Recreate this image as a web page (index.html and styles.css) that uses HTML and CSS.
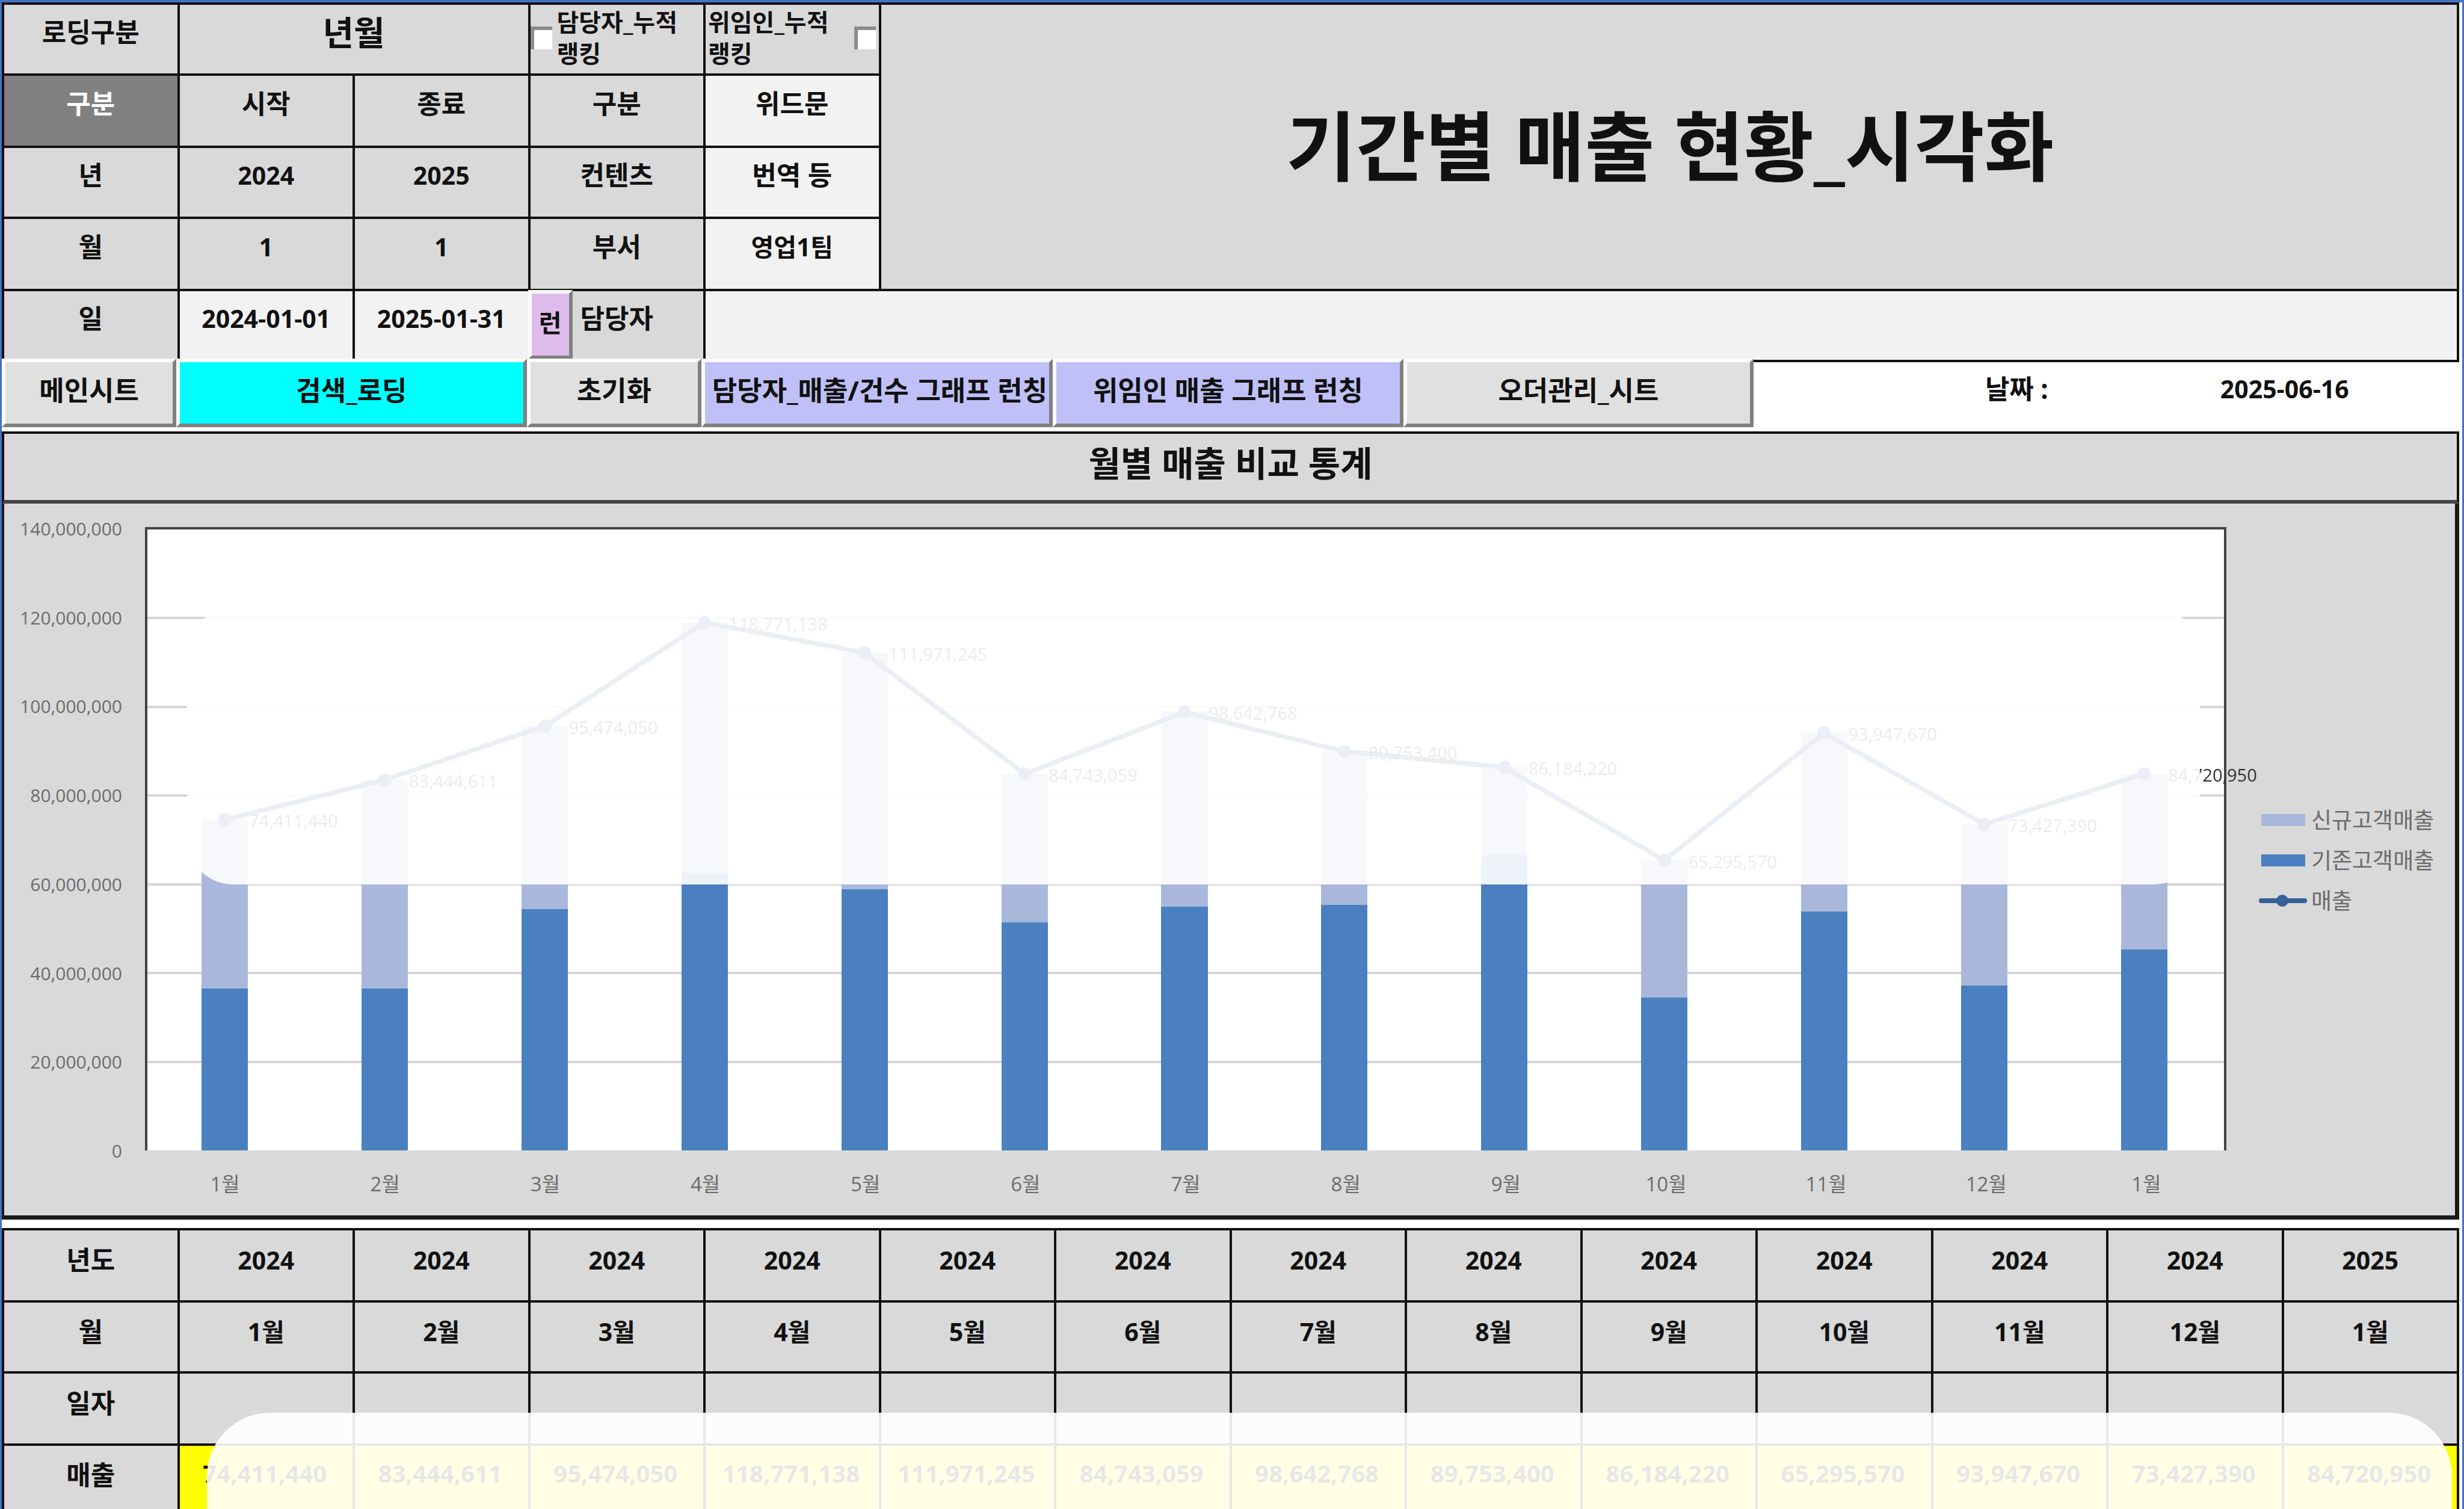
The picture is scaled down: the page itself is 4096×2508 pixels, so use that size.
FILE: index.html
```html
<!DOCTYPE html>
<html lang="ko">
<head>
<meta charset="utf-8">
<title>기간별 매출 현황_시각화</title>
<link rel="stylesheet" href="styles.css">
</head>
<body>
<main class="page">
  <div class="filters">
    <table class="sheet">
      <tr>
        <th>로딩구분</th>
        <td class="period" colspan="2">년월</td>
        <td class="rank"><label class="rank-label"><input type="checkbox" class="check"><span>담당자_누적<br>랭킹</span></label></td>
        <td class="rank"><label class="rank-label rank-label-end"><span>위임인_누적<br>랭킹</span><input type="checkbox" class="check"></label></td>
        <td class="title-cell" colspan="9" rowspan="4"><h1 class="title">기간별 매출 현황_시각화</h1></td>
      </tr>
      <tr><th class="dark">구분</th><th>시작</th><th>종료</th><th>구분</th><td class="light ko">위드문</td></tr>
      <tr><th>년</th><td>2024</td><td>2025</td><th>컨텐츠</th><td class="light ko">번역 등</td></tr>
      <tr><th>월</th><td>1</td><td>1</td><th>부서</th><td class="light">영업1팀</td></tr>
      <tr><th>일</th><td class="light">2024-01-01</td><td class="light">2025-01-31</td><th class="owner">담당자<button type="button" class="btn btn-run">런</button></th><td class="light" colspan="10"></td></tr>
    </table>
  </div>

  <nav class="toolbar">
    <button type="button" class="btn">메인시트</button>
    <button type="button" class="btn btn-cyan">검색_로딩</button>
    <button type="button" class="btn">초기화</button>
    <button type="button" class="btn btn-lilac"><span class="clip">담당자_매출/건수 그래프 런칭</span></button>
    <button type="button" class="btn btn-lilac">위임인 매출 그래프 런칭</button>
    <button type="button" class="btn">오더관리_시트</button>
    <div class="date"><span class="date-key">날짜 :</span><span class="date-value">2025-06-16</span></div>
  </nav>

  <h2 class="section-title">월별 매출 비교 통계</h2>

  <section class="chart">
    <ol class="y-axis">
      <li>140,000,000</li><li>120,000,000</li><li>100,000,000</li><li>80,000,000</li><li>60,000,000</li><li>40,000,000</li><li>20,000,000</li><li>0</li>
    </ol>
    <div class="plot">
      <div class="layer gridlines"><i></i><i></i><i></i><i></i><i></i><i></i><i></i></div>
      <div class="layer columns">
        <div class="column" style="--total:53.15%;--base:26%"><div class="new"></div><div class="base"></div></div>
        <div class="column" style="--total:59.6%;--base:26%"><div class="new"></div><div class="base"></div></div>
        <div class="column" style="--total:68.2%;--base:38.8%"><div class="new"></div><div class="base"></div></div>
        <div class="column" style="--total:84.84%;--base:44.6%"><div class="new"></div><div class="base"></div></div>
        <div class="column" style="--total:79.98%;--base:42%"><div class="new"></div><div class="base"></div></div>
        <div class="column" style="--total:60.53%;--base:36.7%"><div class="new"></div><div class="base"></div></div>
        <div class="column" style="--total:70.46%;--base:39.2%"><div class="new"></div><div class="base"></div></div>
        <div class="column" style="--total:64.11%;--base:39.5%"><div class="new"></div><div class="base"></div></div>
        <div class="column" style="--total:61.56%;--base:47.5%"><div class="new"></div><div class="base"></div></div>
        <div class="column" style="--total:46.64%;--base:24.6%"><div class="new"></div><div class="base"></div></div>
        <div class="column" style="--total:67.11%;--base:38.4%"><div class="new"></div><div class="base"></div></div>
        <div class="column" style="--total:52.45%;--base:26.5%"><div class="new"></div><div class="base"></div></div>
        <div class="column" style="--total:60.52%;--base:32.3%"><div class="new"></div><div class="base"></div></div>
      </div>
      <svg class="layer trend" viewBox="0 0 1300 140" preserveAspectRatio="none" aria-hidden="true">
        <polyline points="50,65.6 150,56.6 250,44.5 350,21.2 450,28 550,55.3 650,41.4 750,50.2 850,53.8 950,74.7 1050,46.1 1150,66.6 1250,55.3"/>
      </svg>
      <div class="layer columns">
        <div class="column" style="--total:53.15%"><b class="dot"></b><span class="value">74,411,440</span></div>
        <div class="column" style="--total:59.6%"><b class="dot"></b><span class="value">83,444,611</span></div>
        <div class="column" style="--total:68.2%"><b class="dot"></b><span class="value">95,474,050</span></div>
        <div class="column" style="--total:84.84%"><b class="dot"></b><span class="value">118,771,138</span></div>
        <div class="column" style="--total:79.98%"><b class="dot"></b><span class="value">111,971,245</span></div>
        <div class="column" style="--total:60.53%"><b class="dot"></b><span class="value">84,743,059</span></div>
        <div class="column" style="--total:70.46%"><b class="dot"></b><span class="value">98,642,768</span></div>
        <div class="column" style="--total:64.11%"><b class="dot"></b><span class="value">89,753,400</span></div>
        <div class="column" style="--total:61.56%"><b class="dot"></b><span class="value">86,184,220</span></div>
        <div class="column" style="--total:46.64%"><b class="dot"></b><span class="value">65,295,570</span></div>
        <div class="column" style="--total:67.11%"><b class="dot"></b><span class="value">93,947,670</span></div>
        <div class="column" style="--total:52.45%"><b class="dot"></b><span class="value">73,427,390</span></div>
        <div class="column" style="--total:60.52%"><b class="dot"></b><span class="value">84,720,950</span></div>
      </div>
      <div class="veil veil-plot"></div>
    </div>
    <ul class="legend">
      <li><span class="swatch swatch-new"></span>신규고객매출</li>
      <li><span class="swatch swatch-base"></span>기존고객매출</li>
      <li><svg class="swatch-line" viewBox="0 0 80 24" aria-hidden="true"><path d="M4 12H76"/><circle cx="39" cy="12" r="10"/></svg>매출</li>
    </ul>
    <ol class="x-axis">
      <li>1월</li><li>2월</li><li>3월</li><li>4월</li><li>5월</li><li>6월</li><li>7월</li><li>8월</li><li>9월</li><li>10월</li><li>11월</li><li>12월</li><li>1월</li>
    </ol>
  </section>

  <section class="data">
    <table class="sheet">
      <tr><th>년도</th><td>2024</td><td>2024</td><td>2024</td><td>2024</td><td>2024</td><td>2024</td><td>2024</td><td>2024</td><td>2024</td><td>2024</td><td>2024</td><td>2024</td><td>2025</td></tr>
      <tr><th>월</th><td>1월</td><td>2월</td><td>3월</td><td>4월</td><td>5월</td><td>6월</td><td>7월</td><td>8월</td><td>9월</td><td>10월</td><td>11월</td><td>12월</td><td>1월</td></tr>
      <tr><th>일자</th><td></td><td></td><td></td><td></td><td></td><td></td><td></td><td></td><td></td><td></td><td></td><td></td><td></td></tr>
      <tr class="sales"><th>매출</th><td>74,411,440</td><td>83,444,611</td><td>95,474,050</td><td>118,771,138</td><td>111,971,245</td><td>84,743,059</td><td>98,642,768</td><td>89,753,400</td><td>86,184,220</td><td>65,295,570</td><td>93,947,670</td><td>73,427,390</td><td>84,720,950</td></tr>
    </table>
    <div class="veil veil-data"></div>
  </section>
</main>
</body>
</html>
```
FILE: styles.css
```css
* { box-sizing: border-box; }

html, body { margin: 0; overflow: hidden; }

body {
  background: #fff;
  color: #111;
  font-family: "Open Sans", "Noto Sans CJK KR", sans-serif;
  font-size: 41px;
  line-height: 52px;
}

.page {
  height: 100vh;
  overflow: hidden;
  border: 3px solid #4472c4;
  border-top-width: 4px;
  border-bottom: 0;
  padding-right: 5px;
}

ol, ul { list-style: none; margin: 0; padding: 0; }

/* spreadsheet cells */
.sheet {
  width: 100%;
  table-layout: fixed;
  border-collapse: collapse;
  font-weight: 700;
}

.sheet tr { height: 118px; }
.sheet tr:nth-child(even) { height: 120px; }

.sheet th, .sheet td {
  border: 4px solid #111;
  background: #d9d9d9;
  padding: 0 0 18px;
  text-align: center;
  vertical-align: middle;
  white-space: nowrap;
}

.filters .sheet th, .filters .sheet td { padding-bottom: 24px; }

.sheet th, .sheet .ko { font-size: 44px; }
.sheet .light { background: #f2f2f2; }
.sheet .dark { background: #808080; color: #fff; }
.sheet .period { font-size: 56px; }

.filters .sheet .rank { padding: 0 0 4px; font-size: 40px; text-align: left; }
.rank-label { display: flex; align-items: center; gap: 8px; }
.rank-label-end { justify-content: space-between; padding: 0 5px 0 4px; }

.check {
  appearance: none;
  flex: none;
  width: 36px;
  height: 38px;
  margin: 0;
  background: #fff;
  border: solid #8c8c8c;
  border-width: 6px 0 0 6px;
}

.filters .sheet .title-cell { padding: 0 0 4px 4px; }
.title { margin: 0; font-size: 126px; line-height: 180px; }

.sheet .owner { position: relative; }

/* raised form buttons */
.btn {
  font: inherit;
  font-size: 45px;
  font-weight: 700;
  color: #111;
  background: #e0e0e0;
  border: 6px solid;
  border-color: #fafafa #808080 #808080 #fafafa;
  padding: 0 0 8px;
  white-space: nowrap;
  overflow: hidden;
}

.btn-cyan { background: #00ffff; }
.btn-lilac { background: #c0c0f8; }

.btn-run {
  position: absolute;
  left: -4px;
  top: -2px;
  width: 74px;
  height: 115px;
  font-size: 41px;
  background: #dfbcee;
}

.clip { display: block; margin: 0 4px 0 12px; overflow: hidden; text-align: left; }

.toolbar {
  position: relative;
  display: grid;
  grid-template-columns: 290fr 582fr 290fr 584fr 582fr 582fr 1172fr;
  height: 114px;
  margin: -6px 0 7px;
}

.date {
  display: grid;
  grid-template-columns: 1fr 1fr;
  align-items: center;
  text-align: center;
  font-weight: 700;
  padding-bottom: 14px;
}

.date-key { padding-left: 288px; font-size: 44px; }
.date-value { padding-left: 6px; }

.section-title {
  margin: 0;
  height: 120px;
  border: 4px solid #111;
  border-bottom: 6px solid #444;
  background: #d9d9d9;
  padding-bottom: 12px;
  font-size: 58px;
  line-height: 98px;
  text-align: center;
}

/* chart */
.chart {
  display: grid;
  grid-template-columns: 234px 1fr 380px;
  grid-template-rows: 1036px 108px;
  padding-top: 39px;
  background: #d9d9d9;
  border: solid #1a1a1a;
  border-width: 0 7px 7px 4px;
  color: #6b6b6b;
  font-size: 30px;
}

.y-axis {
  display: flex;
  flex-direction: column;
  justify-content: space-between;
  margin: -23px 0 -27px;
  padding-right: 38px;
  text-align: right;
}

.plot {
  position: relative;
  background: #fff;
  border: 4px solid #444;
  border-bottom: 0;
}

.layer { position: absolute; inset: -2px 0 0 -4px; }

.gridlines { display: flex; flex-direction: column; inset: 2px 0 -2px; }
.gridlines i { flex: 1; border-bottom: 4px solid #d6d6d6; }
.gridlines i:last-child { border-color: transparent; }

.columns { display: flex; }

.column {
  position: relative;
  flex: 1;
  display: flex;
  flex-direction: column;
  justify-content: flex-end;
  align-items: center;
}

.new { width: 29%; height: calc(var(--total) - var(--base)); background: #a9b8da; }
.base { width: 29%; height: var(--base); background: #4a80c0; }

.trend { width: calc(100% + 4px); height: calc(100% + 2px); }
.trend polyline {
  fill: none;
  stroke: #365f9b;
  stroke-width: 8px;
  stroke-linejoin: round;
  vector-effect: non-scaling-stroke;
}

.dot {
  position: absolute;
  left: calc(50% - 11px);
  bottom: calc(var(--total) - 11px);
  width: 22px;
  height: 22px;
  border-radius: 50%;
  background: #365f9b;
}

.value {
  position: absolute;
  left: calc(50% + 40px);
  bottom: calc(var(--total) - 28px);
  color: #333;
  font-size: 29px;
}

.legend {
  align-self: start;
  display: grid;
  gap: 15px;
  padding: 461px 0 0 58px;
  font-size: 37px;
}

.legend li { display: flex; align-items: center; gap: 10px; white-space: nowrap; }

.swatch { width: 73px; height: 20px; }
.swatch-new { background: #a9b8da; }
.swatch-base { background: #4a80c0; }
.swatch-line { width: 80px; height: 24px; margin: 0 -3px 0 -4px; }
.swatch-line path { stroke: #365f9b; stroke-width: 8; stroke-linecap: round; }
.swatch-line circle { fill: #365f9b; }

.x-axis {
  grid-column: 2;
  display: flex;
  padding-top: 30px;
  font-size: 33px;
  text-align: center;
}

.x-axis li { flex: 1; }

/* translucent panels laid over the sheet */
.veil { position: absolute; background: rgba(255, 255, 255, 0.9); }

.veil-plot {
  left: 66px;
  right: 40px;
  top: 130px;
  height: 460px;
  border-radius: 77px;
}

.data { position: relative; margin-top: 14px; }
.data .sheet tr { height: 120px; }
.data .sheet tr:nth-child(even) { height: 118px; }
.data .sheet .sales td { background: #ffff00; font-size: 40px; padding-right: 4px; padding-bottom: 22px; }

.veil-data {
  left: 341px;
  right: 12px;
  top: 307px;
  bottom: -200px;
  border-radius: 105px;
}
```
